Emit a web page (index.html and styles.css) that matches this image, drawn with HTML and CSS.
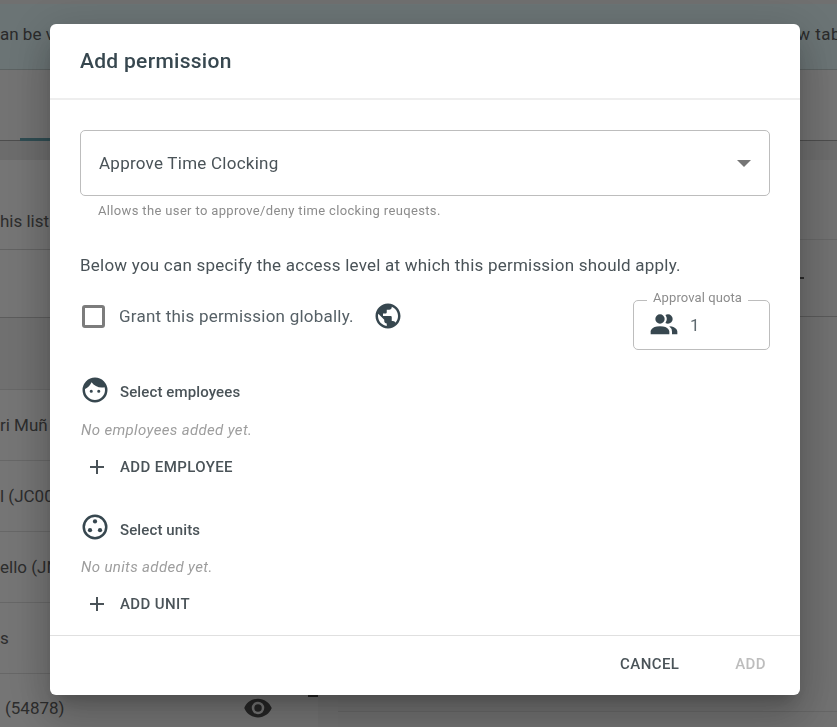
FILE: index.html
```html
<!DOCTYPE html>
<html lang="en">
<head>
    <meta charset="UTF-8">
    <meta name="viewport" content="width=device-width, initial-scale=1.0">
    <title>Add permission</title>
    <link rel="stylesheet" href="styles.css">
</head>
<body>
    <div class="page">
        <div class="topbar"></div>
        <div class="banner">
            <span>an be v</span>
            <span class="banner-right">w tab</span>
        </div>
        <div class="tabs"><div class="tab-active"></div></div>
        <div class="band"></div>
        <div class="columns">
            <div class="col-left">
                <div class="intro">his list</div>
                <div class="filter"></div>
                <div class="list-head"></div>
                <div class="row">ri Muñ</div>
                <div class="row">l (JC00</div>
                <div class="row">ello (JN</div>
                <div class="row">s</div>
                <div class="row row-last">
                    <span>(54878)</span>
                    <svg class="eye" viewBox="0 0 24 24"><path d="M12,9A3,3 0 0,0 9,12A3,3 0 0,0 12,15A3,3 0 0,0 15,12A3,3 0 0,0 12,9M12,17A5,5 0 0,1 7,12A5,5 0 0,1 12,7A5,5 0 0,1 17,12A5,5 0 0,1 12,17M12,4.5C7,4.5 2.73,7.61 1,12C2.73,16.39 7,19.5 12,19.5C17,19.5 21.27,16.39 23,12C21.27,7.61 17,4.5 12,4.5Z"/></svg>
                </div>
            </div>
            <div class="gutter"></div>
            <div class="col-right">
                <div class="panel-top"></div>
                <div class="panel-mid"><span class="dash"></span></div>
                <div class="panel-body"></div>
                <div class="panel-foot"></div>
            </div>
        </div>
    </div>

    <div class="overlay">
        <div class="dialog">
            <header class="dialog-head">
                <h2>Add permission</h2>
            </header>

            <div class="dialog-body">
                <div class="select">
                    <span>Approve Time Clocking</span>
                    <span class="caret"></span>
                </div>
                <p class="hint">Allows the user to approve/deny time clocking reuqests.</p>

                <p class="lead">Below you can specify the access level at which this permission should apply.</p>

                <div class="scope-row">
                    <div class="scope-left">
                        <input type="checkbox" id="global" class="check">
                        <label for="global">Grant this permission globally.</label>
                        <svg class="icon globe" viewBox="0 0 24 24"><path d="M12 2C6.48 2 2 6.48 2 12s4.48 10 10 10 10-4.48 10-10S17.52 2 12 2zm-1 17.93c-3.95-.49-7-3.85-7-7.93 0-.62.08-1.21.21-1.79L9 15v1c0 1.1.9 2 2 2v1.93zm6.9-2.54c-.26-.81-1-1.39-1.9-1.39h-1v-3c0-.55-.45-1-1-1H8v-2h2c.55 0 1-.45 1-1V7h2c1.1 0 2-.9 2-2v-.41c2.93 1.19 5 4.06 5 7.41 0 2.08-.8 3.97-2.1 5.39z"/></svg>
                    </div>
                    <div class="quota">
                        <span class="quota-label">Approval quota</span>
                        <svg class="people" viewBox="0 0 24 24"><path d="M16 17V19H2V17S2 13 9 13 16 17 16 17M12.5 7.5A3.5 3.5 0 1 0 9 11A3.5 3.5 0 0 0 12.5 7.5M15.94 13A5.32 5.32 0 0 1 18 17V19H22V17S22 13.37 15.94 13M15 4A3.39 3.39 0 0 0 13.07 4.59A5 5 0 0 1 13.07 10.41A3.39 3.39 0 0 0 15 11A3.5 3.5 0 0 0 15 4Z"/></svg>
                        <span class="quota-value">1</span>
                    </div>
                </div>

                <div class="pick-head pick-first">
                    <svg class="icon" viewBox="0 0 24 24"><path d="M9,11.75A1.25,1.25 0 0,0 7.75,13A1.25,1.25 0 0,0 9,14.25A1.25,1.25 0 0,0 10.25,13A1.25,1.25 0 0,0 9,11.75M15,11.75A1.25,1.25 0 0,0 13.75,13A1.25,1.25 0 0,0 15,14.25A1.25,1.25 0 0,0 16.25,13A1.25,1.25 0 0,0 15,11.75M12,2A10,10 0 0,0 2,12A10,10 0 0,0 12,22A10,10 0 0,0 22,12A10,10 0 0,0 12,2M12,20C7.59,20 4,16.41 4,12C4,11.71 4,11.42 4.05,11.14C6.41,10.09 8.28,8.16 9.26,5.77C11.07,8.33 14.05,10 17.42,10C18.2,10 18.95,9.91 19.67,9.74C19.88,10.45 20,11.21 20,12C20,16.41 16.41,20 12,20Z"/></svg>
                    <span>Select employees</span>
                </div>
                <p class="empty">No employees added yet.</p>
                <button class="add-btn" type="button">
                    <svg class="plus" viewBox="0 0 24 24"><path d="M19,13H13V19H11V13H5V11H11V5H13V11H19V13Z"/></svg>
                    ADD EMPLOYEE
                </button>

                <div class="pick-head pick-second">
                    <svg class="icon" viewBox="0 0 24 24">
                        <circle class="ring" cx="12" cy="12" r="9"/>
                        <circle cx="12" cy="7.5" r="1.7"/>
                        <circle cx="8" cy="14.5" r="1.7"/>
                        <circle cx="16" cy="14.5" r="1.7"/>
                    </svg>
                    <span>Select units</span>
                </div>
                <p class="empty">No units added yet.</p>
                <button class="add-btn" type="button">
                    <svg class="plus" viewBox="0 0 24 24"><path d="M19,13H13V19H11V13H5V11H11V5H13V11H19V13Z"/></svg>
                    ADD UNIT
                </button>
            </div>

            <footer class="dialog-foot">
                <button class="foot-btn" type="button">CANCEL</button>
                <button class="foot-btn foot-btn-off" type="button">ADD</button>
            </footer>
        </div>
    </div>
</body>
</html>
```

FILE: styles.css
```css
* {
    box-sizing: border-box;
}
html, body {
    height: 100%;
}
body {
    margin: 0;
    overflow: hidden;
    font-family: Roboto, "Liberation Sans", sans-serif;
    background-color: #eaeaea;
    color: #5a5a5a;
}

/* page behind the dialog */
.page {
    height: 727px;
    overflow: hidden;
    display: flex;
    flex-direction: column;
    font-size: 17px;
}
.topbar {
    height: 4px;
    flex-shrink: 0;
    background: #e0e0e0;
}
.banner {
    height: 66px;
    flex-shrink: 0;
    padding-bottom: 6px;
    display: flex;
    align-items: center;
    justify-content: space-between;
    background: #d6e8ea;
    color: #555;
    white-space: nowrap;
    border-bottom: 1px solid #b8c4c4;
}
.banner-right {
    margin-right: -4px;
    letter-spacing: 0.5px;
}
.tabs {
    height: 71px;
    flex-shrink: 0;
    padding-left: 20px;
    display: flex;
    align-items: flex-end;
    background: #e6e6e6;
    border-bottom: 1px solid #9a9a9a;
}
.tab-active {
    width: 120px;
    height: 4px;
    margin-bottom: -2px;
    background: #5f98a4;
}
.band {
    height: 19px;
    flex-shrink: 0;
    background: #d8d8d8;
}
.columns {
    flex: 1;
    display: grid;
    grid-template-columns: 318px 20px 1fr;
}
.col-left {
    white-space: nowrap;
    overflow: hidden;
}
.intro {
    height: 90px;
    padding-bottom: 18px;
    display: flex;
    align-items: flex-end;
    border-bottom: 1px solid #c4c4c4;
}
.filter {
    height: 68px;
    border-bottom: 1px solid #b8b8b8;
}
.list-head {
    height: 72px;
    border-bottom: 1px solid #cfcfcf;
    background: #e0e0e0;
}
.row {
    height: 71px;
    display: flex;
    align-items: center;
    justify-content: space-between;
    border-bottom: 1px solid #cfcfcf;
}
.row-last {
    position: relative;
    padding-left: 5px;
    padding-right: 45px;
    padding-bottom: 2px;
}
/* bottom end of the list scrollbar, mostly behind the dialog */
.row-last::after {
    content: "";
    position: absolute;
    top: 0;
    right: 0;
    width: 10px;
    height: 23px;
    background: #444;
}
.eye {
    width: 30px;
    height: 30px;
    fill: #4c4c4c;
}
.gutter {
    background: #e4e4e4;
}
.col-right {
    background: #e2e2e2;
}
.panel-top {
    height: 80px;
    border-bottom: 1px solid #cdcdcd;
}
.panel-mid {
    height: 77px;
    display: flex;
    align-items: center;
    justify-content: flex-end;
    padding-right: 33px;
    border-bottom: 1px solid #b4b4b4;
}
.dash {
    width: 5px;
    height: 2px;
    background: #555;
}
.panel-body {
    height: 395px;
    border-bottom: 1px solid #cdcdcd;
}

/* dialog */
.overlay {
    position: fixed;
    inset: 0;
    padding: 24px 37px 32px 50px;
    display: flex;
    background: rgba(0, 0, 0, 0.5);
}
.dialog {
    flex: 1;
    display: flex;
    flex-direction: column;
    background: #fff;
    border-radius: 6px;
    box-shadow: 0 11px 15px -7px rgba(0, 0, 0, 0.2), 0 24px 38px 3px rgba(0, 0, 0, 0.14), 0 9px 46px 8px rgba(0, 0, 0, 0.12);
}
.dialog-head {
    height: 76px;
    padding: 0 30px;
    display: flex;
    align-items: center;
    border-bottom: 2px solid #eeeeee;
}
.dialog-head h2 {
    margin: 0;
    font-size: 21px;
    font-weight: 500;
    letter-spacing: 0.3px;
    color: #37474f;
}
.dialog-body {
    flex: 1;
    padding: 30px 30px 0;
}
.select {
    height: 66px;
    padding: 0 18px;
    display: flex;
    align-items: center;
    justify-content: space-between;
    border: 1px solid #bdbdbd;
    border-radius: 5px;
    font-size: 17px;
    letter-spacing: 0.25px;
    color: #4a5358;
}
.caret {
    width: 0;
    height: 0;
    border-left: 7px solid transparent;
    border-right: 7px solid transparent;
    border-top: 7px solid #757575;
}
.hint {
    margin: 8px 0 0;
    padding-left: 18px;
    font-size: 13px;
    line-height: 14px;
    letter-spacing: 0.35px;
    color: #8c8c8c;
}
.lead {
    margin: 35px 0 0;
    font-size: 17px;
    line-height: 24px;
    letter-spacing: 0.22px;
    color: #4a5358;
}
.scope-row {
    margin-top: 23px;
    display: flex;
    justify-content: space-between;
    align-items: flex-start;
}
.scope-left {
    height: 24px;
    margin-top: 4px;
    display: flex;
    align-items: center;
    font-size: 17px;
    letter-spacing: 0.22px;
    color: #566066;
}
.check {
    appearance: none;
    width: 23px;
    height: 23px;
    margin: 0 14px 0 2px;
    border: 3px solid #7c7c7c;
    border-radius: 3px;
}
.icon {
    width: 30px;
    height: 30px;
    flex-shrink: 0;
    fill: #37474f;
}
.ring {
    fill: none;
    stroke: #37474f;
    stroke-width: 2;
}
.globe {
    margin-left: 19px;
}
.quota {
    position: relative;
    width: 137px;
    height: 50px;
    padding: 0 0 0 14px;
    display: flex;
    align-items: center;
    border: 1px solid #bdbdbd;
    border-radius: 5px;
}
.quota-label {
    position: absolute;
    top: -10px;
    left: 13px;
    padding: 0 6px;
    background: #fff;
    font-size: 13px;
    line-height: 14px;
    letter-spacing: 0.1px;
    color: #8c8c8c;
}
.people {
    width: 32px;
    height: 32px;
    fill: #37474f;
}
.quota-value {
    margin-left: 10px;
    font-size: 17px;
    color: #5f6a70;
}
.pick-head {
    height: 30px;
    display: flex;
    align-items: center;
    gap: 10px;
    font-size: 15px;
    font-weight: 500;
    letter-spacing: 0.12px;
    color: #4a5358;
}
.pick-head span {
    padding-top: 3px;
}
.pick-first {
    margin-top: 25px;
}
.pick-second {
    margin-top: 27px;
}
.pick-second span {
    padding-top: 5px;
}
.empty {
    margin: 15px 0 0 1px;
    font-size: 15px;
    line-height: 20px;
    font-style: italic;
    letter-spacing: 0.35px;
    color: #9e9e9e;
}
.add-btn {
    height: 36px;
    margin-top: 9px;
    padding: 0 0 0 5px;
    display: flex;
    align-items: center;
    gap: 11px;
    border: none;
    background: none;
    font-family: inherit;
    font-size: 15px;
    font-weight: 500;
    letter-spacing: 0.4px;
    color: #4a5358;
    cursor: pointer;
}
.plus {
    width: 24px;
    height: 24px;
    fill: #4a5358;
}
.dialog-foot {
    height: 60px;
    padding: 0 34px 4px 0;
    display: flex;
    align-items: center;
    justify-content: flex-end;
    gap: 56px;
    border-top: 1px solid #e0e0e0;
}
.foot-btn {
    padding: 0;
    border: none;
    background: none;
    font-family: inherit;
    font-size: 15px;
    font-weight: 500;
    letter-spacing: 0.4px;
    color: #4a5358;
    cursor: pointer;
}
.foot-btn-off {
    color: #bdbdbd;
    cursor: default;
}
```
